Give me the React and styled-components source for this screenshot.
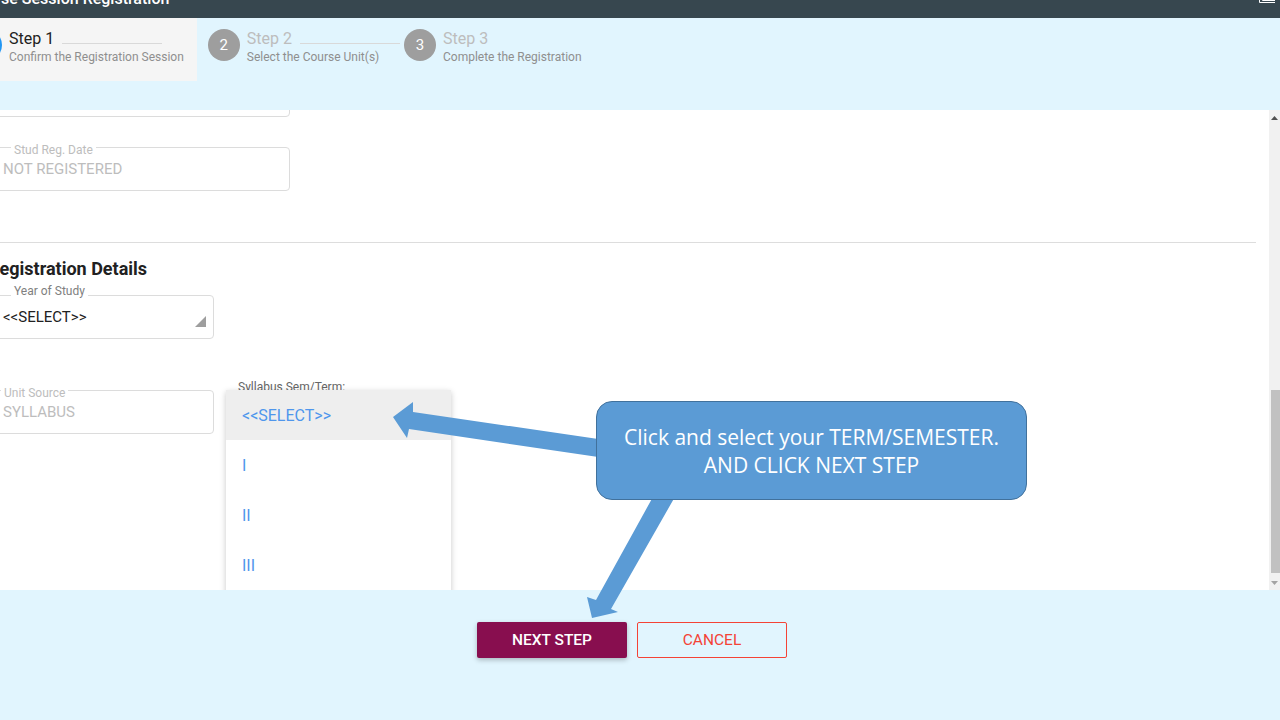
import React from "react";
import styled, { createGlobalStyle } from "styled-components";

const GlobalStyle = createGlobalStyle`
  html, body {
    margin: 0;
    padding: 0;
    background: #ffffff;
  }
  * {
    box-sizing: border-box;
  }
`;

const Root = styled.div`
  position: relative;
  width: 1280px;
  height: 720px;
  display: flex;
  flex-direction: column;
  overflow: hidden;
  font-family: Roboto, "Liberation Sans", sans-serif;
`;

const Header = styled.div`
  height: 18px;
  flex-shrink: 0;
  display: flex;
  justify-content: space-between;
  background-color: #37474f;
  overflow: hidden;
`;

const Title = styled.div`
  margin-top: -11px;
  margin-left: -33px;
  font-size: 16px;
  line-height: 20px;
  font-weight: 500;
  color: #ffffff;
  white-space: nowrap;
`;

const Stepper = styled.div`
  height: 92px;
  flex-shrink: 0;
  background-color: #e1f5fe;
`;

const StepRow = styled.div`
  display: flex;
  height: 63px;
  margin-left: -38px;
`;

const Step = styled.div`
  display: flex;
  align-items: flex-start;
  gap: 7px;
  padding: 11px ${(p) => p.$pr}px 0 ${(p) => p.$pl}px;
  background-color: ${(p) => (p.$active ? "#f5f5f5" : "transparent")};
`;

const Circle = styled.div`
  width: 32px;
  height: 32px;
  flex-shrink: 0;
  border-radius: 50%;
  display: flex;
  align-items: center;
  justify-content: center;
  font-size: 15px;
  color: #ffffff;
  background-color: ${(p) => (p.$active ? "#2196f3" : "#9e9e9e")};
`;

const StepText = styled.div`
  display: flex;
  flex-direction: column;
  margin-top: 0;
`;

const TitleRow = styled.div`
  display: flex;
  align-items: flex-end;
`;

const StepTitle = styled.div`
  font-size: 16px;
  line-height: 20px;
  color: ${(p) => (p.$active ? "#212121" : "#bdbdbd")};
`;

const Connector = styled.div`
  width: 100px;
  height: 1px;
  margin-left: 8px;
  margin-bottom: 5px;
  background-color: #d9d9d9;
`;

const StepSub = styled.div`
  font-size: 12px;
  line-height: 16px;
  color: #8f8f8f;
  white-space: nowrap;
`;

const Content = styled.div`
  flex: 1;
  display: flex;
  min-height: 0;
  background-color: #ffffff;
`;

const Scroller = styled.div`
  flex: 1;
  overflow: hidden;
`;

const Inner = styled.div`
  margin: -37px 13px 0 -12px;
`;

const Field = styled.div`
  position: relative;
  width: ${(p) => p.$w}px;
  height: 44px;
  margin-top: ${(p) => p.$mt || 0}px;
  padding: 0 14px;
  display: flex;
  align-items: center;
  justify-content: space-between;
  border: 1px solid #dcdcdc;
  border-radius: 4px;
  font-size: 15px;
  color: ${(p) => (p.$disabled ? "#bdbdbd" : "#212121")};
`;

const Legend = styled.span`
  position: absolute;
  top: ${(p) => p.$top}px;
  left: ${(p) => p.$left}px;
  padding: 0 3px;
  background-color: #ffffff;
  font-size: 12px;
  line-height: 14px;
  color: ${(p) => (p.$disabled ? "#bdbdbd" : "#808080")};
`;

const Triangle = styled.svg`
  align-self: flex-end;
  margin-bottom: 11px;
  margin-right: -7px;
`;

const Divider = styled.div`
  height: 1px;
  margin-top: 51px;
  background-color: #dddddd;
`;

const Heading = styled.h3`
  margin: 14px 0 0;
  font-size: 18px;
  line-height: 24px;
  font-weight: 700;
  color: #212121;
`;

const Row = styled.div`
  display: flex;
  align-items: flex-start;
  gap: 24px;
  margin-top: ${(p) => p.$mt}px;
`;

const Column = styled.div`
  position: relative;
  width: 225px;
`;

const Label = styled.div`
  font-size: 12px;
  line-height: 14px;
  color: #666666;
`;

const Menu = styled.div`
  position: absolute;
  top: 10px;
  left: -12px;
  width: 225px;
  background-color: #ffffff;
  box-shadow: 0 2px 6px rgba(0, 0, 0, 0.22);
  z-index: 2;
`;

const MenuItem = styled.div`
  height: 50px;
  padding: 0 16px;
  display: flex;
  align-items: center;
  font-size: 16px;
  color: #4f96ec;
  background-color: ${(p) => (p.$active ? "#eeeeee" : "#ffffff")};
`;

const Scrollbar = styled.div`
  width: 11px;
  flex-shrink: 0;
  display: flex;
  flex-direction: column;
  background-color: #f1f1f1;
`;

const ScrollArrow = styled.div`
  height: 15px;
  display: flex;
  align-items: center;
  justify-content: center;
`;

const Track = styled.div`
  flex: 1;
  display: flex;
  flex-direction: column;
  align-items: flex-end;
`;

const Thumb = styled.div`
  width: 9px;
  height: 183px;
  margin-top: 265px;
  background-color: #c1c1c1;
`;

const Footer = styled.div`
  height: 130px;
  flex-shrink: 0;
  display: flex;
  align-items: flex-start;
  justify-content: center;
  gap: 10px;
  padding: 32px 16px 0 0;
  background-color: #e1f5fe;
`;

const PrimaryButton = styled.button`
  width: 150px;
  height: 36px;
  border: none;
  border-radius: 2px;
  font-family: Roboto, "Liberation Sans", sans-serif;
  font-size: 15.5px;
  font-weight: 500;
  color: #ffffff;
  background-color: #880e4f;
  box-shadow: 0 2px 5px rgba(0, 0, 0, 0.25);
`;

const OutlineButton = styled.button`
  width: 150px;
  height: 36px;
  border: 1px solid #f44336;
  border-radius: 2px;
  font-family: Roboto, "Liberation Sans", sans-serif;
  font-size: 15.5px;
  color: #f44336;
  background-color: transparent;
`;

const ArrowLayer = styled.svg`
  position: absolute;
  left: 0;
  top: 0;
  pointer-events: none;
  z-index: 3;
`;

const Callout = styled.div`
  position: absolute;
  left: 596px;
  top: 401px;
  width: 431px;
  height: 99px;
  display: flex;
  flex-direction: column;
  align-items: center;
  justify-content: center;
  border: 1px solid #41719c;
  border-radius: 16px;
  background-color: #5b9bd5;
  font-family: "Open Sans", "Noto Sans", sans-serif;
  font-size: 21px;
  line-height: 28px;
  color: #ffffff;
  z-index: 4;
`;

const steps = [
  { n: 1, title: "Step 1", sub: "Confirm the Registration Session", active: true, pl: 8, pr: 13 },
  { n: 2, title: "Step 2", sub: "Select the Course Unit(s)", pl: 11, pr: 4 },
  { n: 3, title: "Step 3", sub: "Complete the Registration", pl: 0, pr: 0 },
];

const terms = ["<<SELECT>>", "I", "II", "III", "IV"];

const App = () => {
  return (
    <>
      <GlobalStyle />
      <Root>
        <Header>
          <Title>Course Session Registration</Title>
          <svg width="22" height="18" viewBox="0 0 22 18">
            <path d="M1.5 0 V2.5 H17" stroke="#ffffff" strokeWidth="1" fill="none" />
            <path d="M4.5 0 V0.5 H17" stroke="#ffffff" strokeWidth="1" fill="none" />
          </svg>
        </Header>

        <Stepper>
          <StepRow>
            {steps.map((s) => (
              <Step key={s.n} $active={s.active} $pl={s.pl} $pr={s.pr}>
                <Circle $active={s.active}>{s.n}</Circle>
                <StepText>
                  <TitleRow>
                    <StepTitle $active={s.active}>{s.title}</StepTitle>
                    {s.n < 3 && <Connector />}
                  </TitleRow>
                  <StepSub>{s.sub}</StepSub>
                </StepText>
              </Step>
            ))}
          </StepRow>
        </Stepper>

        <Content>
          <Scroller>
            <Inner>
              <Field $w={302} $disabled>
                <Legend $top={-5} $left={22} $disabled>Stud Reg. No</Legend>
                2019/REG
              </Field>
              <Field $w={302} $mt={30} $disabled>
                <Legend $top={-5} $left={22} $disabled>Stud Reg. Date</Legend>
                NOT REGISTERED
              </Field>

              <Divider />
              <Heading>Registration Details</Heading>

              <Field $w={226} $mt={14}>
                <Legend $top={-12} $left={22}>Year of Study</Legend>
                {"<<SELECT>>"}
                <Triangle width="11" height="11" viewBox="0 0 11 11">
                  <polygon points="11,0 11,11 0,11" fill="#9e9e9e" />
                </Triangle>
              </Field>

              <Row $mt={41}>
                <Field $w={226} $mt={10} $disabled>
                  <Legend $top={-5} $left={12} $disabled>Unit Source</Legend>
                  SYLLABUS
                </Field>
                <Column>
                  <Label>Syllabus Sem/Term:</Label>
                  <Menu>
                    {terms.map((t, i) => (
                      <MenuItem key={t} $active={i === 0}>
                        {t}
                      </MenuItem>
                    ))}
                  </Menu>
                </Column>
              </Row>
            </Inner>
          </Scroller>
          <Scrollbar>
            <ScrollArrow>
              <svg width="7" height="4" viewBox="0 0 7 4">
                <polygon points="3.5,0 7,4 0,4" fill="#505050" />
              </svg>
            </ScrollArrow>
            <Track>
              <Thumb />
            </Track>
            <ScrollArrow>
              <svg width="7" height="4" viewBox="0 0 7 4">
                <polygon points="0,0 7,0 3.5,4" fill="#a3a3a3" />
              </svg>
            </ScrollArrow>
          </Scrollbar>
        </Content>

        <Footer>
          <PrimaryButton>NEXT STEP</PrimaryButton>
          <OutlineButton>CANCEL</OutlineButton>
        </Footer>

        <ArrowLayer width="1280" height="720" viewBox="0 0 1280 720">
          <polygon
            points="393,417 413,402 413,412 605,440 605,458 409,429 407,438"
            fill="#5b9bd5"
          />
          <polygon
            points="592,618 587,597 596,600 654,495 676,495 611,609 618,612"
            fill="#5b9bd5"
          />
        </ArrowLayer>
        <Callout>
          <div>Click and select your TERM/SEMESTER.</div>
          <div>AND CLICK NEXT STEP</div>
        </Callout>
      </Root>
    </>
  );
};

export default App;
